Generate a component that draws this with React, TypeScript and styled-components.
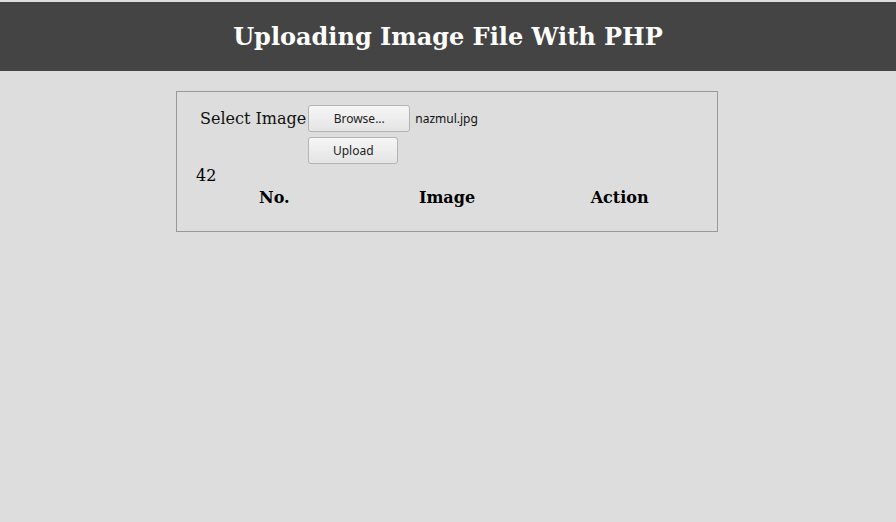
import { createGlobalStyle } from "styled-components";
import styled from "styled-components";

const GlobalStyle = createGlobalStyle`
    html, body {
        margin: 0;
        padding: 0;
        background: #dddddd;
        font-family: "DejaVu Serif", serif;
    }
`;

const Page = styled.div`
    min-height: 522px;
    padding-top: 2px;
    background: #dddddd;
`;

const Header = styled.header`
    height: 69px;
    background: #444444;
    display: flex;
    align-items: center;
    justify-content: center;
`;

const Title = styled.h1`
    margin: 0;
    color: #ffffff;
    font-size: 24px;
    font-weight: bold;
    font-family: "DejaVu Serif", serif;
`;

const Box = styled.section`
    width: 520px;
    margin: 20px 0 0 calc(50% - 272px);
    border: 1px solid #999999;
    padding: 13px 10px 21px;
`;

const Form = styled.form`
    display: grid;
    grid-template-columns: auto auto 1fr;
    column-gap: 2px;
    row-gap: 5px;
    align-items: center;
    padding-left: 13px;
`;

const Label = styled.label`
    font-size: 16px;
    color: #111;
`;

const Button = styled.button<{ $w: number }>`
    width: ${({ $w }) => $w}px;
    height: 27px;
    border: 1px solid #b4b4b4;
    border-radius: 3px;
    background: linear-gradient(#f6f6f6, #e4e4e4);
    font-family: "Noto Sans", "DejaVu Sans", sans-serif;
    font-size: 12px;
    color: #222;
    padding: 0;
`;

const FileName = styled.span`
    font-family: "Noto Sans", "DejaVu Sans", sans-serif;
    font-size: 12px;
    color: #111;
    margin-left: 3px;
`;

const Count = styled.div`
    font-size: 16px;
    margin: 2px 0 0 9px;
`;

const Table = styled.table`
    width: 100%;
    border-collapse: separate;
    border-spacing: 2px;
`;

const Th = styled.th`
    font-size: 16px;
    font-weight: bold;
    padding: 1px;
    width: 33.33%;
`;

export default function App() {
    return <>
        <GlobalStyle />
        <Page>
            <Header>
                <Title>Uploading Image File With PHP</Title>
            </Header>
            <Box>
                <Form onSubmit={e => e.preventDefault()}>
                    <Label>Select Image</Label>
                    <Button type="button" $w={102}>Browse...</Button>
                    <FileName>nazmul.jpg</FileName>
                    <span />
                    <Button type="submit" $w={90}>Upload</Button>
                    <span />
                </Form>
                <Count>42</Count>
                <Table>
                    <thead>
                        <tr>
                            <Th>No.</Th>
                            <Th>Image</Th>
                            <Th>Action</Th>
                        </tr>
                    </thead>
                </Table>
            </Box>
        </Page>
    </>;
}
